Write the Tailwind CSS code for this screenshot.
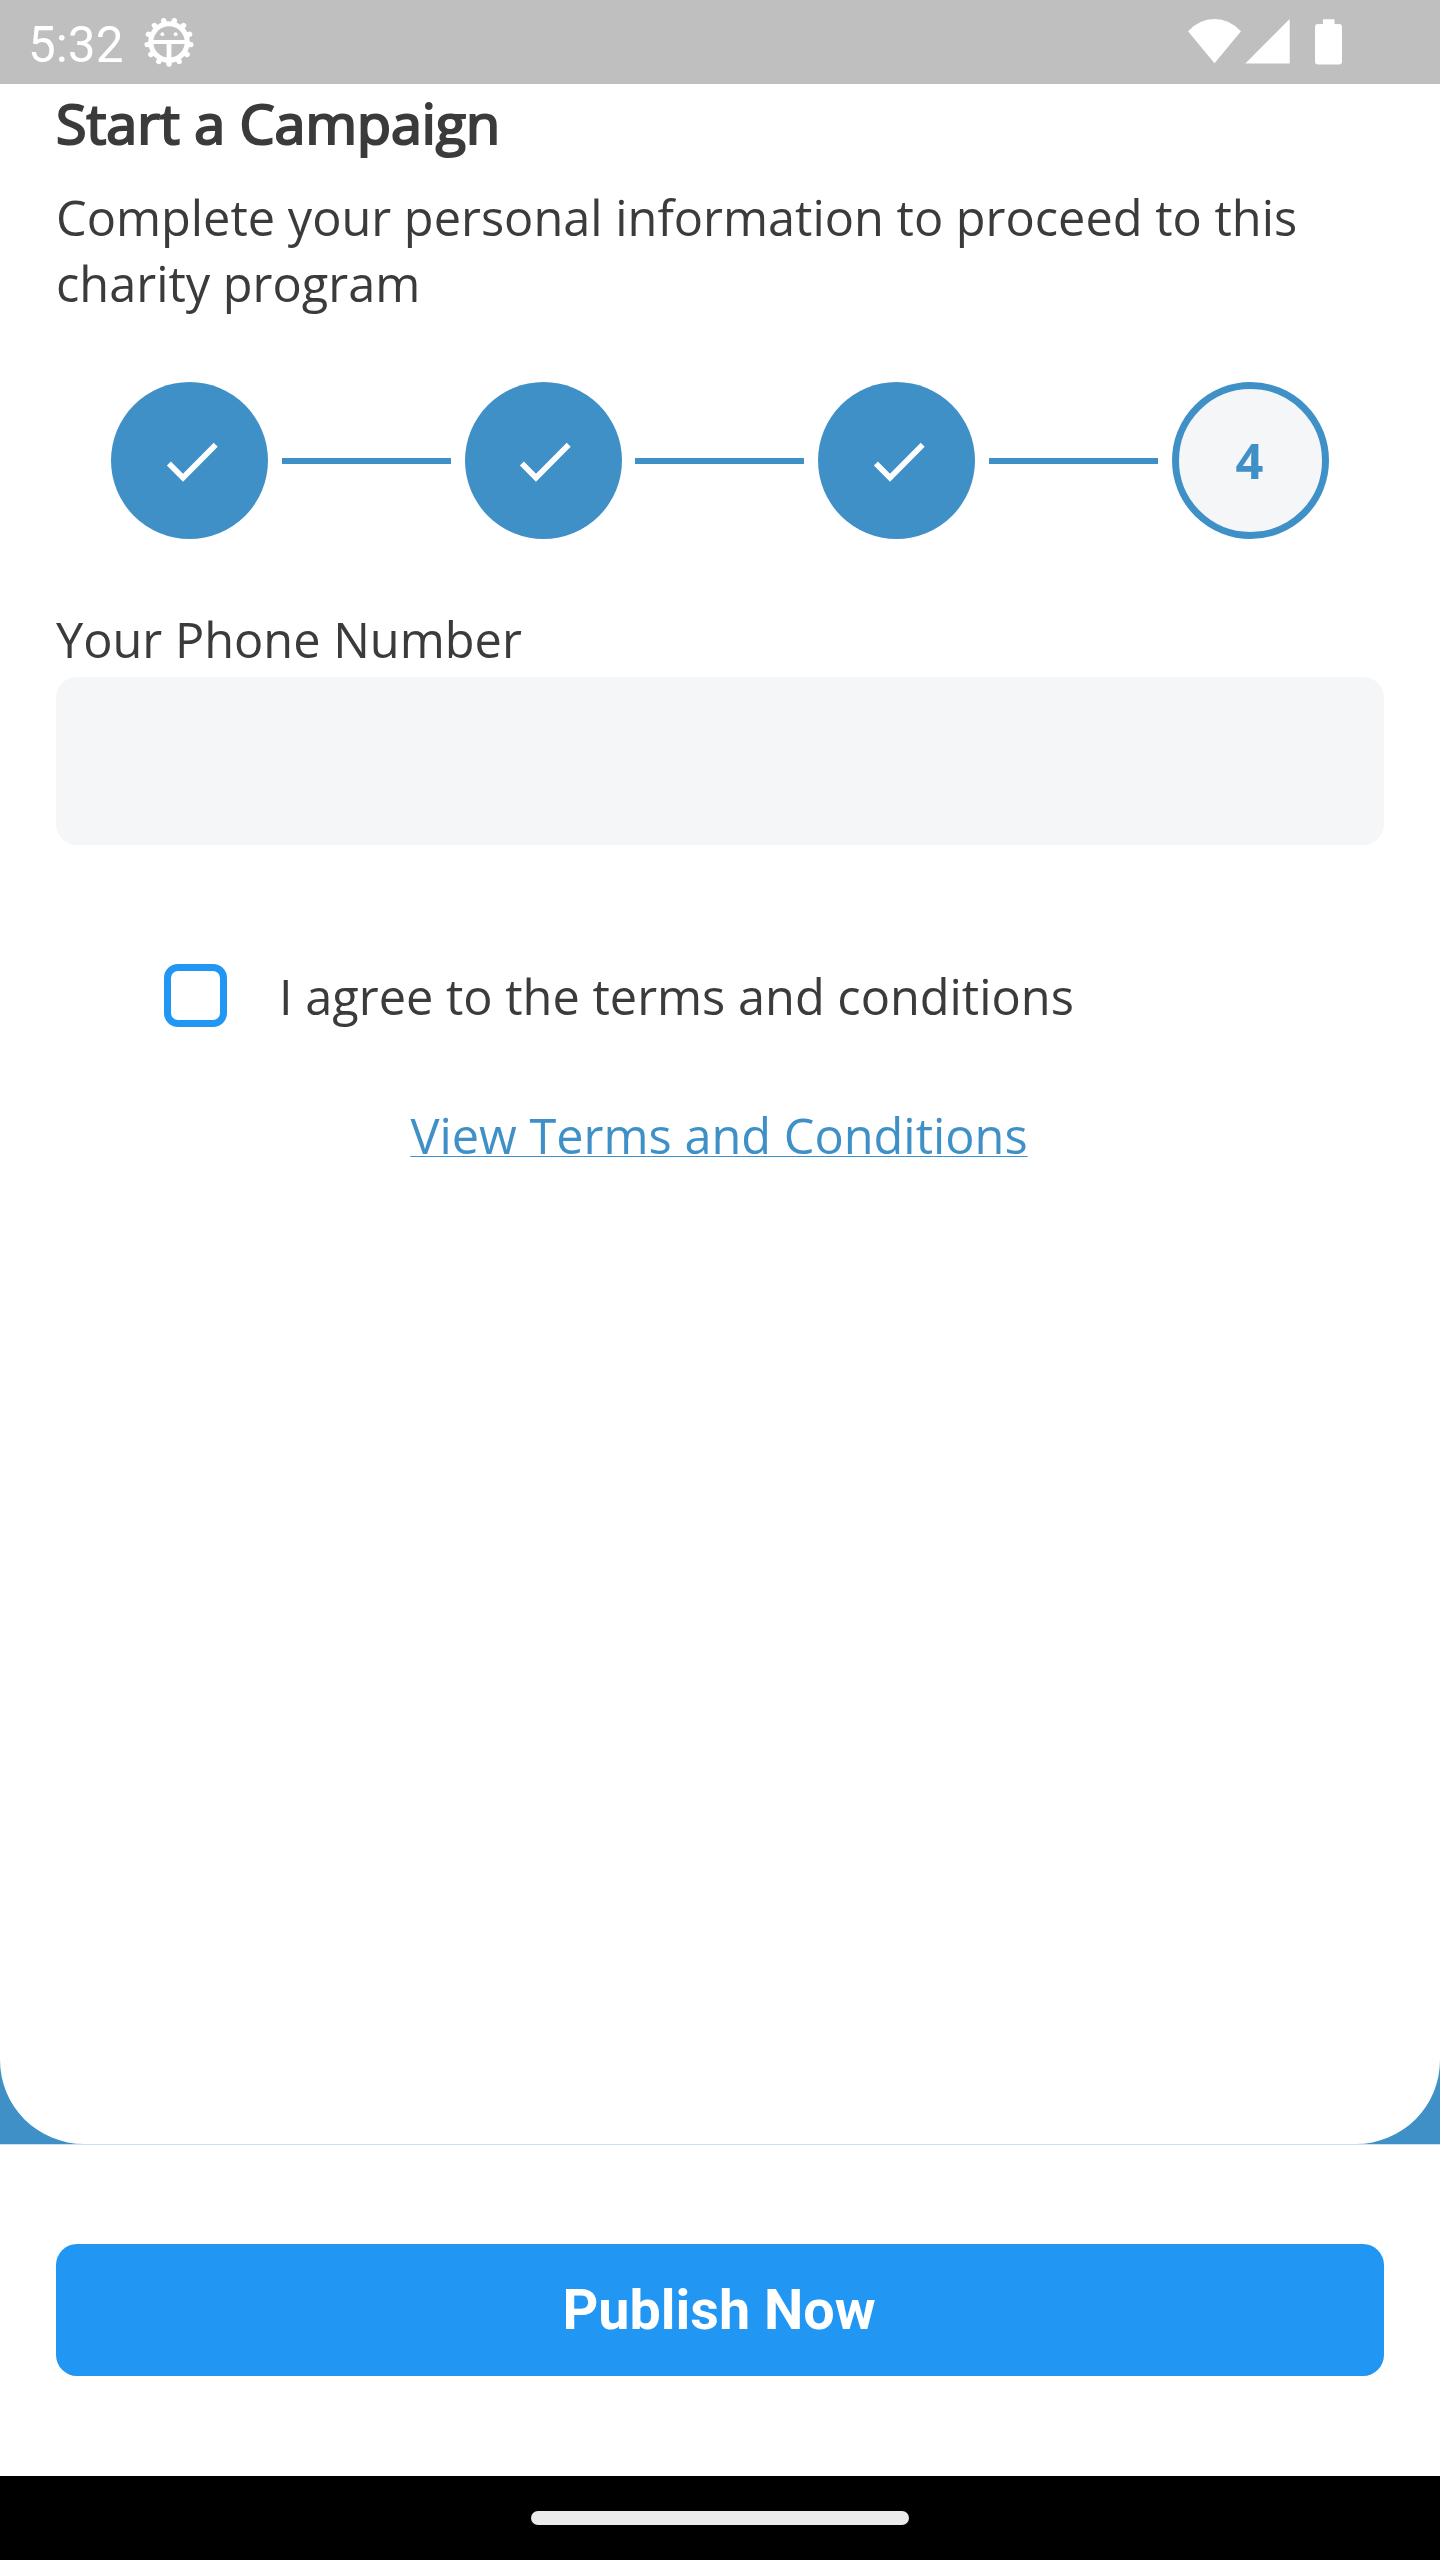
<!DOCTYPE html>
<html lang="en">
<head>
<meta charset="utf-8">
<title>Start a Campaign</title>
<script src="https://cdn.jsdelivr.net/npm/@tailwindcss/browser@4"></script>
</head>
<body class="w-[1440px] h-[2560px] flex flex-col overflow-hidden bg-white text-[#3b3b3b] font-['Open_Sans',sans-serif]">
<header class="h-[84px] shrink-0 bg-[#bfbfbf] flex items-center pl-[28px] pr-[98px] text-white">
  <span class="font-['Roboto',sans-serif] text-[49.5px] leading-[60px] pt-[5px]">5:32</span>
  <svg class="ml-[20px] size-[52px]" viewBox="-26 -26 52 52" fill="none" stroke="white">
    <circle r="18.200" stroke-width="5"/>
    <g stroke-width="5.400" stroke-linecap="round">
      <path id="tooth" d="M0 19V22"/>
      <use href="#tooth" transform="rotate(27.690)"/><use href="#tooth" transform="rotate(55.380)"/><use href="#tooth" transform="rotate(83.080)"/><use href="#tooth" transform="rotate(110.770)"/><use href="#tooth" transform="rotate(138.460)"/><use href="#tooth" transform="rotate(166.150)"/><use href="#tooth" transform="rotate(193.850)"/><use href="#tooth" transform="rotate(221.540)"/><use href="#tooth" transform="rotate(249.230)"/><use href="#tooth" transform="rotate(276.920)"/><use href="#tooth" transform="rotate(304.620)"/><use href="#tooth" transform="rotate(332.310)"/>
    </g>
    <path d="M-17 0H17" stroke-width="3.800"/><path d="M0 0V17" stroke-width="4.800"/>
    <circle cx="-6.600" cy="-7.800" r="1.900" fill="white" stroke="none"/><circle cx="6.600" cy="-7.800" r="1.900" fill="white" stroke="none"/>
  </svg>
  <svg class="ml-auto w-[53px] h-[46px]" viewBox="0 0 53 46" fill="white"><path d="M0 12.300Q11.500 0 26.500 0T53 12.300L26.500 44.300Z"/></svg>
  <svg class="ml-[4px] w-[45px] h-[46px]" viewBox="0 0 45 46" fill="white"><path d="M44.700 0V44.500H.3Z"/></svg>
  <svg class="ml-[25px] w-[27px] h-[46px]" viewBox="0 0 27 46" fill="white"><path d="M8 .3h11.500V5H24q3 0 3 3v34.500q0 3-3 3H3q-3 0-3-3V8q0-3 3-3h5Z"/></svg>
</header>
<div class="h-[2060px] shrink-0 bg-[#4090c8]">
<main class="h-full bg-white rounded-b-[84px] px-[56px] flex flex-col">
  <h1 class="mt-px text-[55.6px] leading-[76px] [-webkit-text-stroke:2.2px_currentColor]">Start a Campaign</h1>
  <p class="mt-[23px] text-[48.7px] leading-[66px]">Complete your personal information to proceed to this<br>charity program</p>
  <div class="mt-[66px] h-[157px] px-[55px] flex items-center justify-between">
    <div class="size-[157px] rounded-full bg-[#4090c8] grid place-items-center"><svg class="size-[56px]" viewBox="0 0 56 56" fill="none" stroke="white" stroke-width="5.600"><path d="M6.900 30.500L21 44.700L53.700 11.800"/></svg></div>
    <div class="w-[169px] h-[6px] bg-[#4090c8]"></div>
    <div class="size-[157px] rounded-full bg-[#4090c8] grid place-items-center"><svg class="size-[56px]" viewBox="0 0 56 56" fill="none" stroke="white" stroke-width="5.600"><path d="M6.900 30.500L21 44.700L53.700 11.800"/></svg></div>
    <div class="w-[169px] h-[6px] bg-[#4090c8]"></div>
    <div class="size-[157px] rounded-full bg-[#4090c8] grid place-items-center"><svg class="size-[56px]" viewBox="0 0 56 56" fill="none" stroke="white" stroke-width="5.600"><path d="M6.900 30.500L21 44.700L53.700 11.800"/></svg></div>
    <div class="w-[169px] h-[6px] bg-[#4090c8]"></div>
    <div class="size-[157px] rounded-full bg-[#f5f6f8] border-[7px] border-[#4090c8] grid place-items-center pr-[2px] text-[48.7px] leading-[67px] font-bold text-[#4090c8]">4</div>
  </div>
  <label class="mt-[67px] text-[48.7px] leading-[67px]">Your Phone Number</label>
  <div class="mt-[4px] h-[168px] rounded-[21px] bg-[#f5f6f8]"></div>
  <div class="mt-[118px] pl-[108px] flex items-start"><span class="mt-px size-[63px] rounded-[14px] border-[7px] border-[#2196f3]"></span><span class="ml-[52px] text-[48.7px] leading-[67px]">I agree to the terms and conditions</span></div>
  <a class="mt-[72px] mr-[2px] self-center text-[48.7px] leading-[67px] text-[#4090c8] underline decoration-1 underline-offset-2 [text-decoration-skip-ink:none]">View Terms and Conditions</a>
</main>
</div>
<div class="h-px shrink-0 bg-[#cbe1f0]"></div>
<div class="grow flex flex-col px-[56px] pt-[99px]"><button class="h-[132px] rounded-[21px] bg-[#2196f3] text-white font-['Roboto',sans-serif] font-bold text-[55.7px] pt-[2px] pr-[2px]">Publish Now</button></div>
<footer class="h-[84px] shrink-0 bg-black grid place-items-center"><div class="w-[378px] h-[14px] rounded-full bg-[#ebebeb]"></div></footer>
</body>
</html>
